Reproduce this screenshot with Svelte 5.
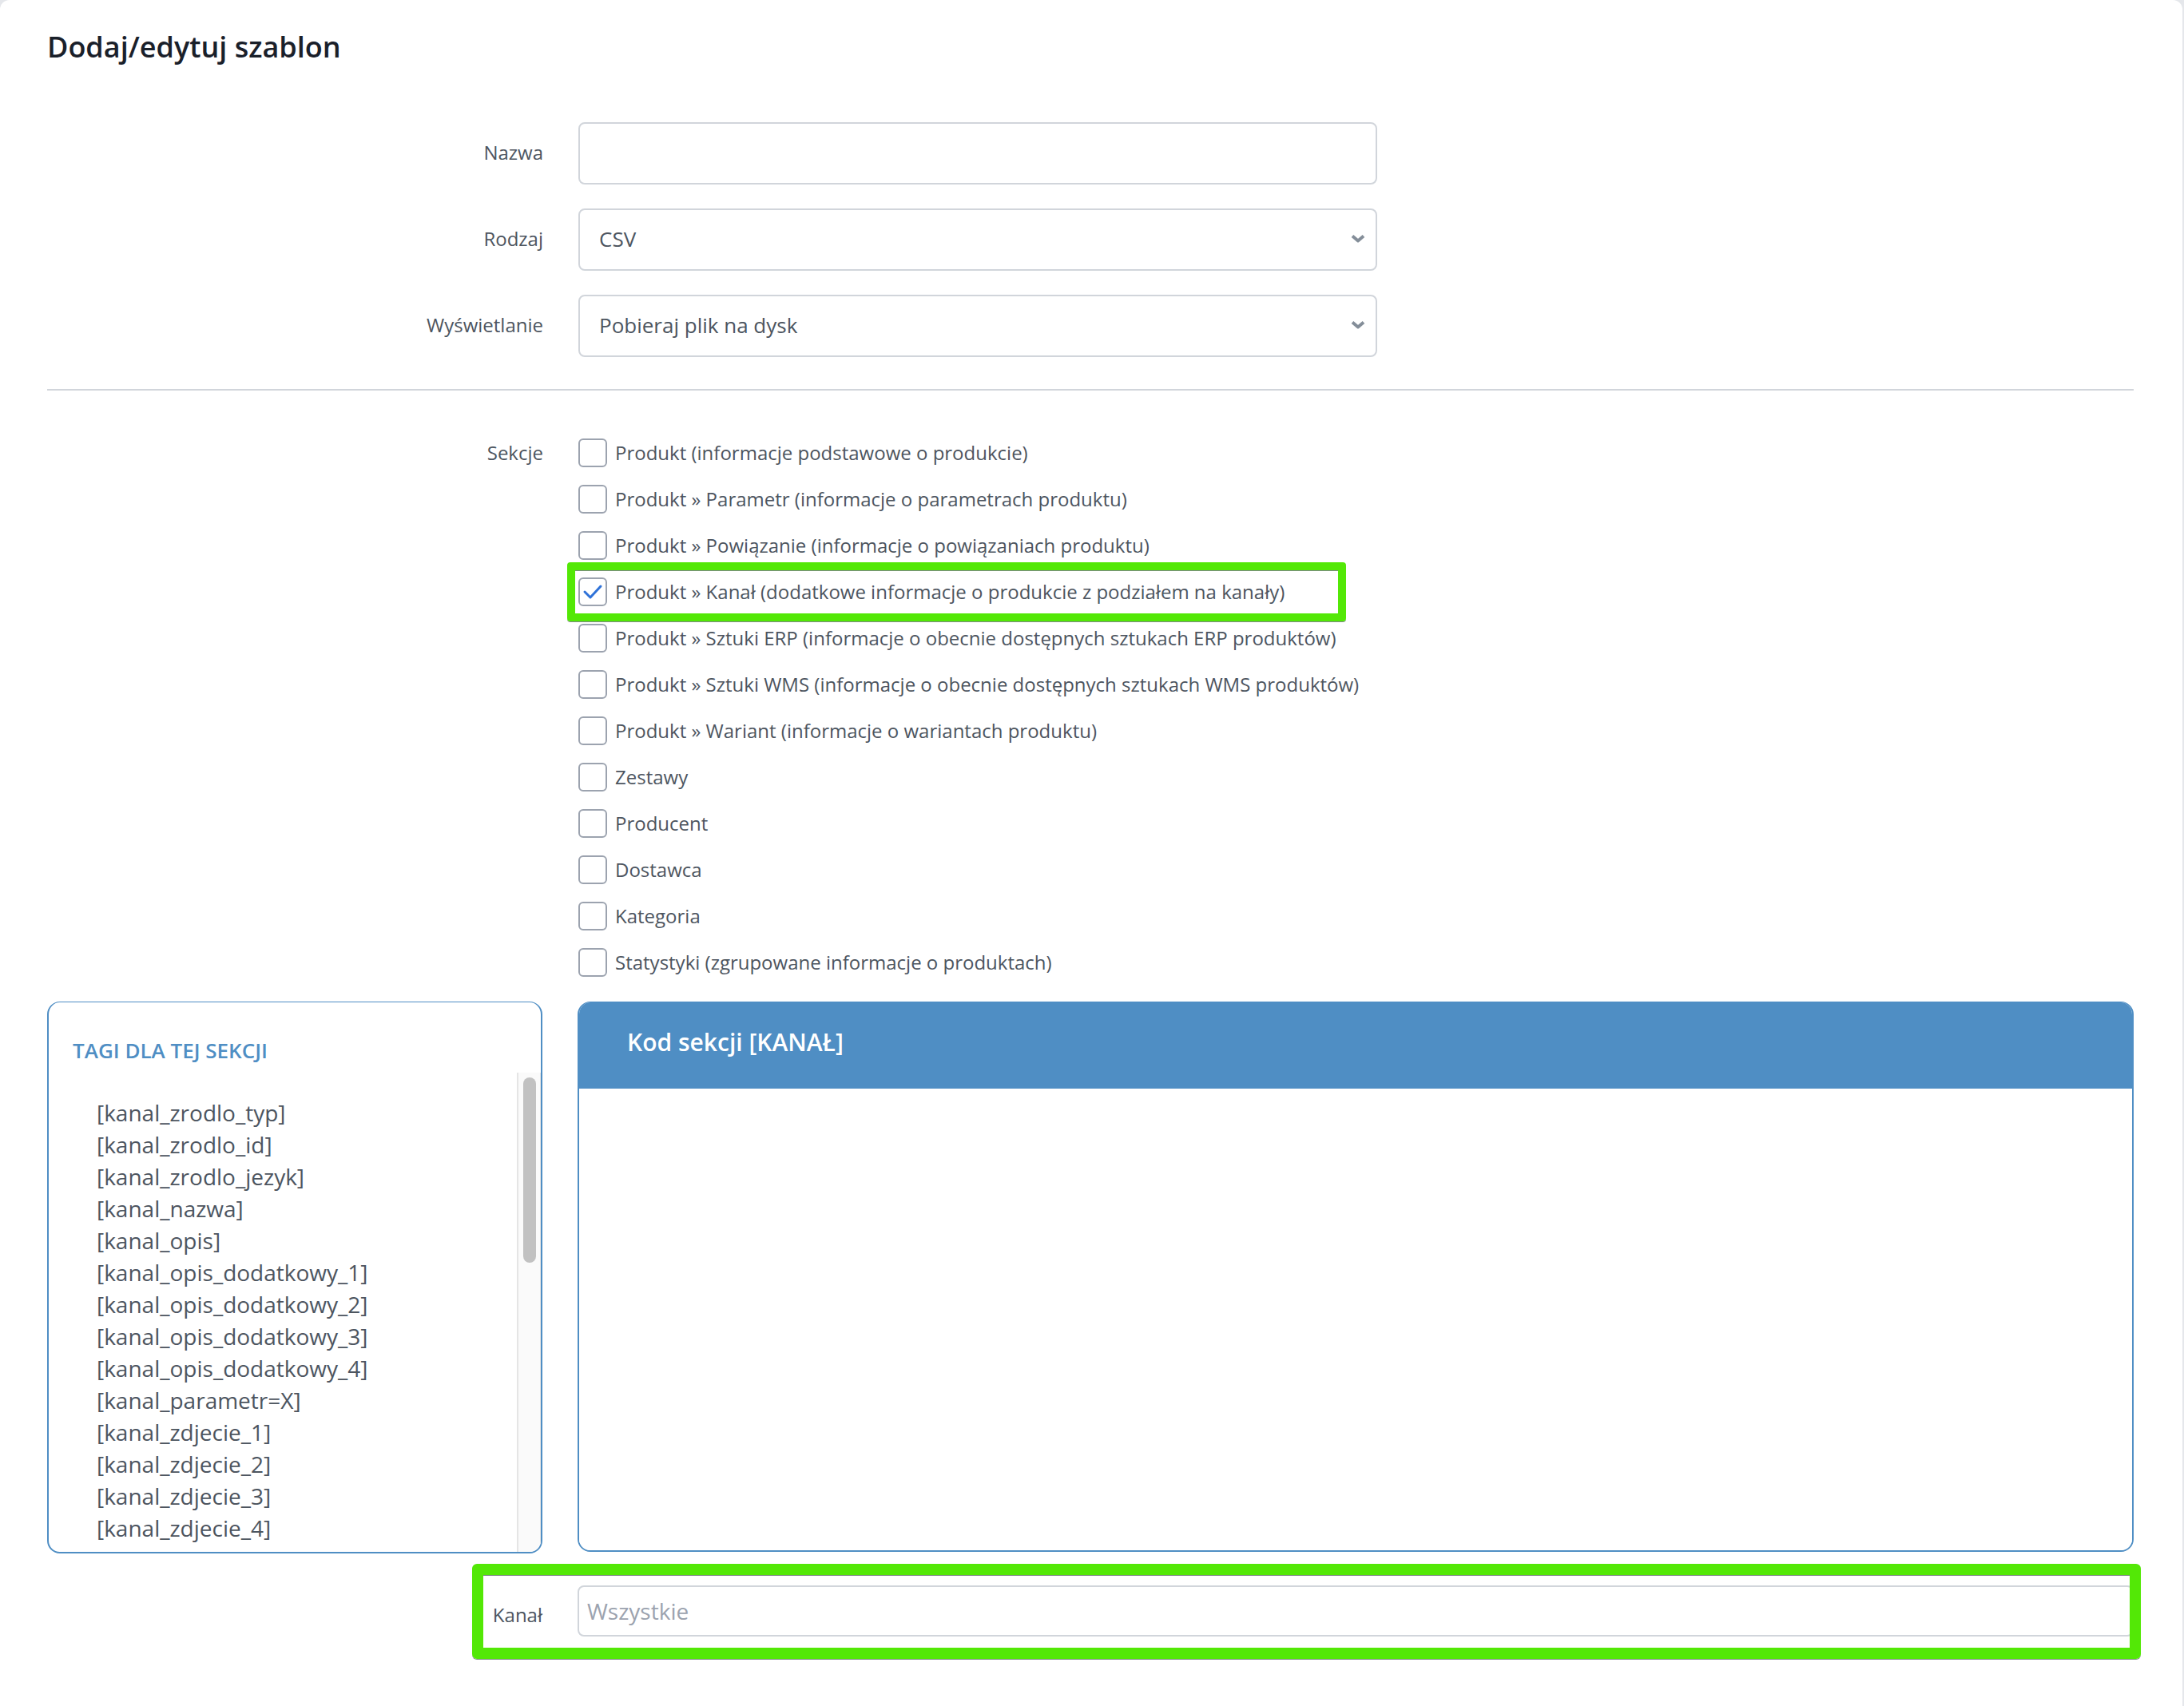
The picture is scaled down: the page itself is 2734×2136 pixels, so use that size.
<script lang="ts">
  interface Section {
    id: string;
    label: string;
    checked: boolean;
  }

  const kinds = ['CSV', 'XML'];
  const displayModes = ['Pobieraj plik na dysk', 'Wyświetlaj w przeglądarce'];

  let sections: Section[] = $state([
    { id: 'produkt', label: 'Produkt (informacje podstawowe o produkcie)', checked: false },
    { id: 'parametr', label: 'Produkt » Parametr (informacje o parametrach produktu)', checked: false },
    { id: 'powiazanie', label: 'Produkt » Powiązanie (informacje o powiązaniach produktu)', checked: false },
    { id: 'kanal', label: 'Produkt » Kanał (dodatkowe informacje o produkcie z podziałem na kanały)', checked: true },
    { id: 'erp', label: 'Produkt » Sztuki ERP (informacje o obecnie dostępnych sztukach ERP produktów)', checked: false },
    { id: 'wms', label: 'Produkt » Sztuki WMS (informacje o obecnie dostępnych sztukach WMS produktów)', checked: false },
    { id: 'wariant', label: 'Produkt » Wariant (informacje o wariantach produktu)', checked: false },
    { id: 'zestawy', label: 'Zestawy', checked: false },
    { id: 'producent', label: 'Producent', checked: false },
    { id: 'dostawca', label: 'Dostawca', checked: false },
    { id: 'kategoria', label: 'Kategoria', checked: false },
    { id: 'statystyki', label: 'Statystyki (zgrupowane informacje o produktach)', checked: false }
  ]);

  const tags = [
    'kanal_zrodlo_typ',
    'kanal_zrodlo_id',
    'kanal_zrodlo_jezyk',
    'kanal_nazwa',
    'kanal_opis',
    'kanal_opis_dodatkowy_1',
    'kanal_opis_dodatkowy_2',
    'kanal_opis_dodatkowy_3',
    'kanal_opis_dodatkowy_4',
    'kanal_parametr=X',
    'kanal_zdjecie_1',
    'kanal_zdjecie_2',
    'kanal_zdjecie_3',
    'kanal_zdjecie_4',
    'kanal_zdjecie_5'
  ];

  let name = $state('');
  let kind = $state('CSV');
  let displayMode = $state('Pobieraj plik na dysk');
  let code = $state('');
  let channel = $state('');
</script>

{#snippet chevron()}
  <svg class="chevron" viewBox="0 0 18 12" width="18" height="12" aria-hidden="true">
    <path d="M2 2.5l7 6 7-6" fill="none" stroke="currentColor" stroke-width="4" stroke-linejoin="round" />
  </svg>
{/snippet}

<main class="card">
  <h1>Dodaj/edytuj szablon</h1>

  <form>
    <div class="fields">
      <div class="row">
        <label class="row-label" for="name">Nazwa</label>
        <input id="name" class="control" type="text" bind:value={name} />
      </div>
      <div class="row">
        <label class="row-label" for="kind">Rodzaj</label>
        <div class="select">
          <select id="kind" class="control" bind:value={kind}>
            {#each kinds as item}
              <option>{item}</option>
            {/each}
          </select>
          {@render chevron()}
        </div>
      </div>
      <div class="row">
        <label class="row-label" for="display">Wyświetlanie</label>
        <div class="select">
          <select id="display" class="control" bind:value={displayMode}>
            {#each displayModes as item}
              <option>{item}</option>
            {/each}
          </select>
          {@render chevron()}
        </div>
      </div>
    </div>

    <hr />

    <div class="row sections" role="group" aria-labelledby="sections-label">
      <span class="row-label" id="sections-label">Sekcje</span>
      <div class="checks">
        {#each sections as section (section.id)}
          <div class="check" class:marked={section.id === 'kanal'}>
            <span class="box">
              <input type="checkbox" id={section.id} bind:checked={section.checked} />
              <svg class="tick" viewBox="0 0 36 36" width="36" height="36" aria-hidden="true">
                <path d="M8 18l7 7L28 11" fill="none" stroke="currentColor" stroke-width="3" stroke-linecap="round" stroke-linejoin="round" />
              </svg>
            </span>
            <label for={section.id}>{section.label}</label>
          </div>
        {/each}
      </div>
    </div>

    <div class="editor">
      <section class="tags">
        <h2>TAGI DLA TEJ SEKCJI</h2>
        <div class="tags-body">
          <ul>
            {#each tags as tag}
              <li>[{tag}]</li>
            {/each}
          </ul>
          <div class="track"><div class="thumb"></div></div>
        </div>
      </section>

      <section class="code">
        <label for="code">Kod sekcji [KANAŁ]</label>
        <textarea id="code" bind:value={code}></textarea>
      </section>
    </div>

    <div class="channel">
      <label class="row-label" for="channel">Kanał</label>
      <input id="channel" type="text" placeholder="Wszystkie" bind:value={channel} />
    </div>
  </form>
</main>

<style>
  :global(body) {
    background: #e5e7eb;
  }

  .card {
    --label-width: 621px;
    --blue: #4f8ec4;
    --green: #53e806;
    box-sizing: border-box;
    min-height: 100vh;
    margin-right: 2px;
    padding: 32px 61px 58px 59px;
    border-radius: 12px 12px 0 0;
    background: #fff;
    color: #4d555f;
    font-family: 'Open Sans', 'Noto Sans', sans-serif;
    font-size: 26px;
    line-height: 40px;
  }

  h1 {
    margin: 0 0 67px;
    color: #1a202a;
    font-size: 36px;
    font-weight: 600;
    line-height: 54px;
  }

  .fields {
    display: grid;
    gap: 30px;
    padding-bottom: 40px;
  }

  .row {
    display: grid;
    grid-template-columns: var(--label-width) minmax(0, 1000px);
    column-gap: 44px;
    align-items: center;
  }

  .row-label {
    padding-bottom: 2px;
    font-size: 24px;
    text-align: right;
  }

  .control {
    display: block;
    box-sizing: border-box;
    width: 100%;
    height: 78px;
    padding: 0 24px 2px;
    border: 2px solid #d1d5db;
    border-radius: 8px;
    background: #fff;
    color: inherit;
    font: inherit;
    appearance: none;
  }

  .select {
    position: relative;
  }

  .chevron {
    position: absolute;
    top: 32px;
    right: 15px;
    color: #848e99;
    pointer-events: none;
  }

  hr {
    margin: 0 0 58px;
    border: 0;
    border-top: 2px solid #d1d5db;
  }

  .sections {
    align-items: start;
    padding-bottom: 29px;
  }

  .checks {
    display: grid;
    gap: 18px;
    font-size: 24px;
  }

  .check {
    position: relative;
    display: flex;
    align-items: center;
    gap: 10px;
    height: 40px;
    white-space: nowrap;
  }

  .marked::after {
    content: '';
    position: absolute;
    inset: -17px auto -17px -14px;
    box-sizing: border-box;
    width: 975px;
    border: 10px solid var(--green);
    border-radius: 4px;
    box-shadow: 0 1px 0 #7d8884, inset 0 1px 0 #7d8884;
    pointer-events: none;
  }

  .box {
    position: relative;
    width: 36px;
    height: 36px;
  }

  .box input {
    display: block;
    width: 36px;
    height: 36px;
    margin: 0;
    box-sizing: border-box;
    border: 2px solid #9ca3af;
    border-radius: 6px;
    background: #fff;
    appearance: none;
  }

  .tick {
    position: absolute;
    inset: 0;
    display: none;
    color: #2f72d8;
    pointer-events: none;
  }

  .box input:checked + .tick {
    display: block;
  }

  .editor {
    display: grid;
    grid-template-columns: 620px minmax(0, 1fr);
    column-gap: 44px;
    align-items: start;
  }

  .tags {
    overflow: hidden;
    border: 2px solid var(--blue);
    border-top-width: 1px;
    border-radius: 16px;
  }

  .tags h2 {
    margin: 0;
    padding: 40px 30px 8px;
    color: var(--blue);
    font-size: 26px;
    font-weight: 600;
    line-height: 40px;
  }

  .tags-body {
    display: flex;
    height: 600px;
  }

  .tags ul {
    flex: 1;
    margin: 0;
    padding: 30px 60px 0;
    overflow: hidden;
    font-size: 28px;
    list-style: none;
  }

  .track {
    box-sizing: border-box;
    width: 30px;
    padding: 6px;
    border: solid #e5e5e5;
    border-width: 0 1px 0 2px;
    background: #fafafa;
  }

  .thumb {
    width: 16px;
    height: 232px;
    border-radius: 8px;
    background: #c1c1c1;
  }

  .code {
    overflow: hidden;
    border: 2px solid var(--blue);
    border-top-width: 1px;
    border-radius: 16px;
  }

  .code label {
    display: block;
    padding: 30px 60px 38px;
    background: var(--blue);
    color: #fff;
    font-size: 30px;
    font-weight: 600;
  }

  .code textarea {
    display: block;
    box-sizing: border-box;
    width: 100%;
    height: 578px;
    padding: 24px;
    border: 0;
    color: inherit;
    font: inherit;
    resize: none;
  }

  .channel {
    position: relative;
    display: grid;
    grid-template-columns: 620px minmax(0, 1fr);
    column-gap: 44px;
    align-items: center;
    margin-top: 40px;
  }

  .channel::after {
    content: '';
    position: absolute;
    inset: -27px -9px -28px 532px;
    border: 14px solid var(--green);
    border-radius: 6px;
    box-shadow: 0 1px 0 #7d8884, inset 0 1px 0 #7d8884;
    pointer-events: none;
  }

  .channel .row-label {
    padding-top: 12px;
  }

  .channel input {
    box-sizing: border-box;
    width: 100%;
    height: 64px;
    padding: 0 10px;
    border: 2px solid #d1d5db;
    border-radius: 8px;
    color: inherit;
    font: inherit;
    font-size: 28px;
  }

  .channel input::placeholder {
    color: #9ca3af;
    opacity: 1;
  }
</style>
